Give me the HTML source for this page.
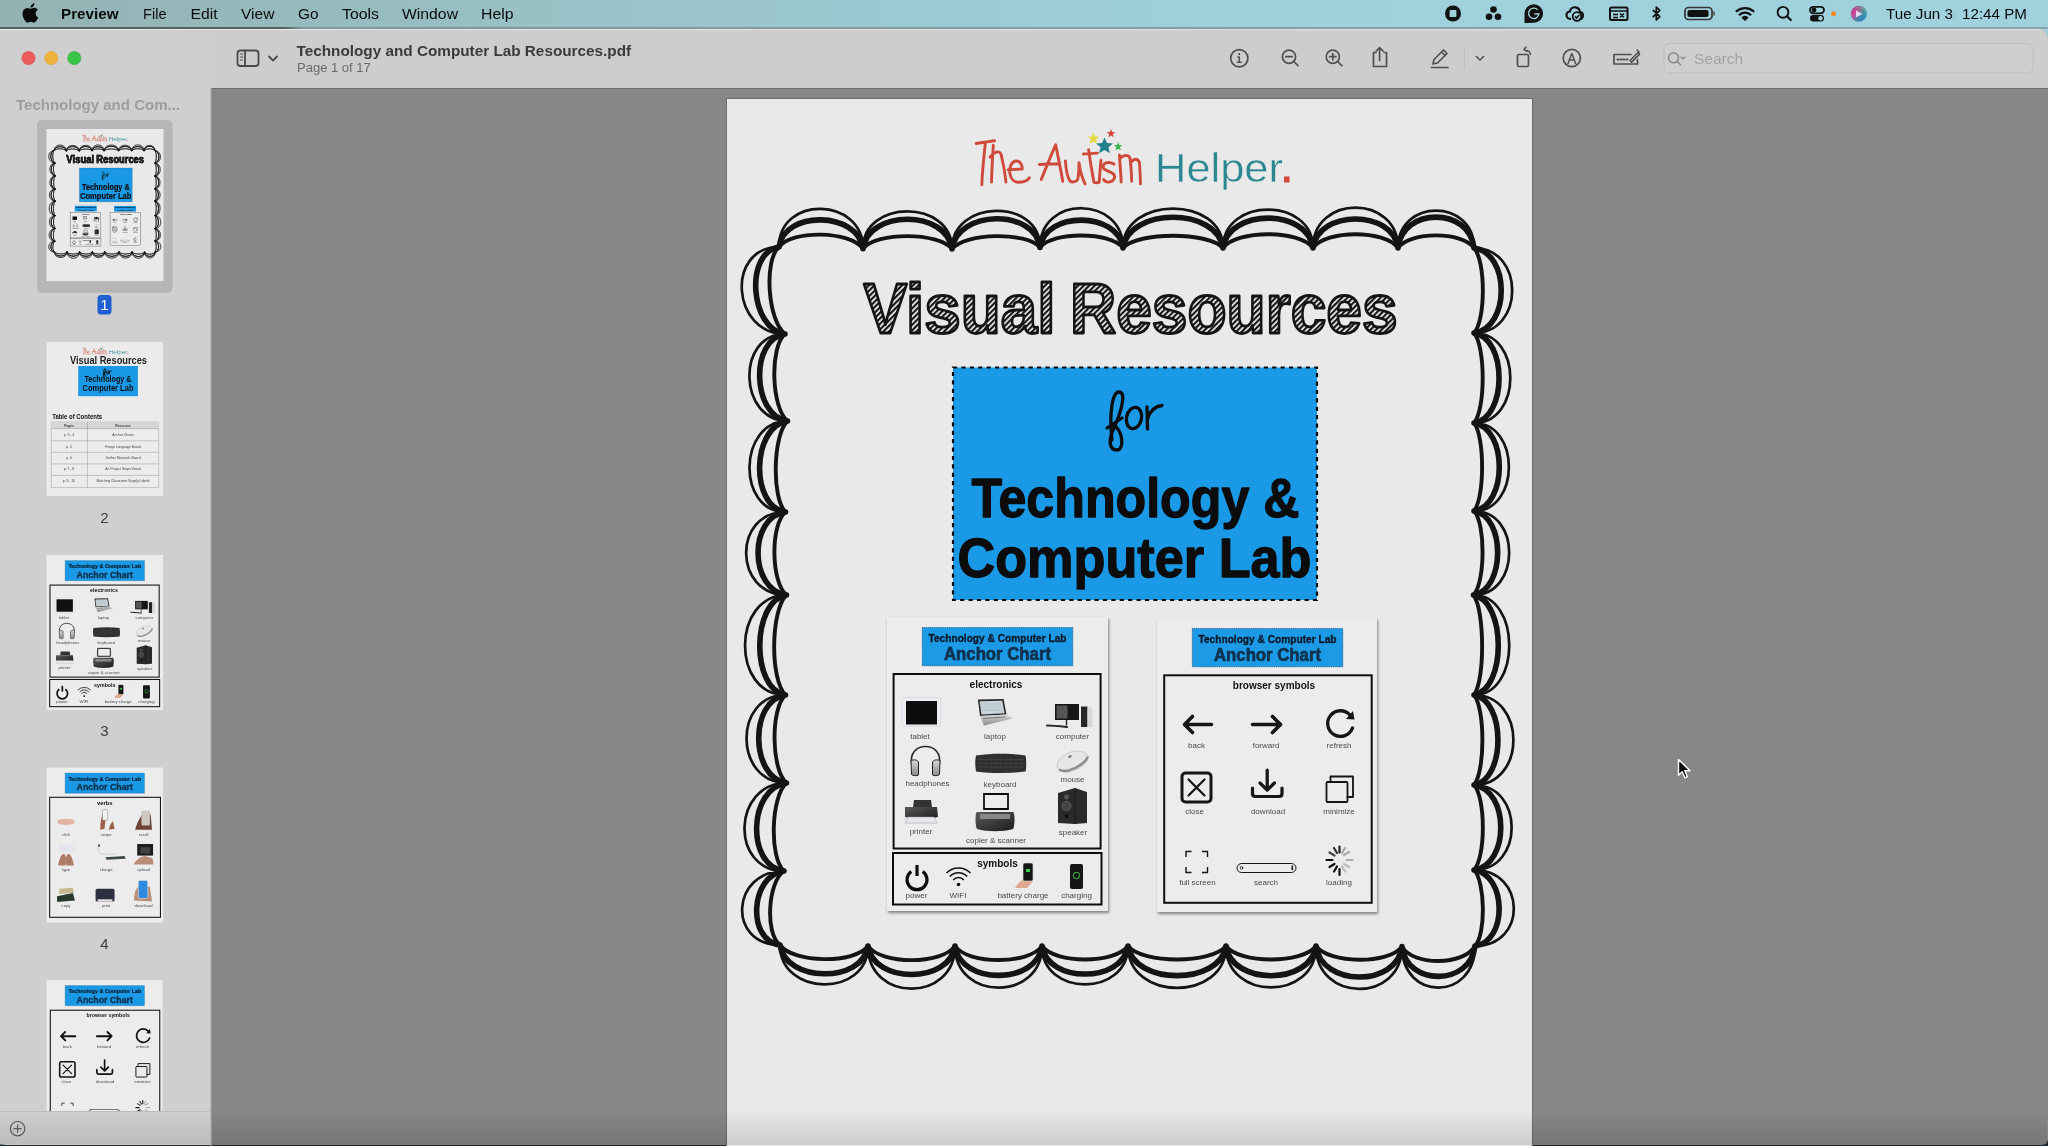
<!DOCTYPE html>
<html><head><meta charset="utf-8">
<style>
html,body{margin:0;padding:0;}
body{width:2048px;height:1146px;overflow:hidden;position:relative;background:linear-gradient(180deg,#a0d0dc 0,#a0d0dc 60px,#1b2838 60px);font-family:"Liberation Sans",sans-serif;}
.abs{position:absolute;}
#menubar{left:0;top:0;width:2048px;height:27px;background:linear-gradient(90deg,#93b2b3 0%,#99c3c9 30%,#9fd0dc 60%,#a0d2de 100%);}
#mbline{left:0;top:27px;width:2048px;height:1.5px;background:linear-gradient(90deg,#56625f 0,#56625f 285px,#7d979c 300px,#86a6ae 100%);}
#win{left:0;top:28.5px;width:2048px;height:1116px;border-radius:0 9px 6px 6px;overflow:hidden;background:#878787;}
#sidebar{left:0;top:0;width:211px;height:1116px;background:#cfcfcf;border-top:1px solid #e4e4e4;}
#toolbar{left:211px;top:0;width:1837px;height:58.5px;background:#cdcdcd;border-bottom:1px solid #6f6f6f;border-top:1px solid #e4e4e4;}
#sbbar{left:0;top:1083.5px;width:211px;height:33px;background:linear-gradient(90deg,#d0d0d0,#c8c8c8);border-top:1px solid #bdbdbd;}
</style></head><body>
<div id="menubar" class="abs"></div><div id="mbline" class="abs"></div>
<div id="win" class="abs">
  <div id="sidebar" class="abs"></div>
  <div id="toolbar" class="abs"></div>
</div>
<svg class="abs" style="left:0;top:0;will-change:transform" width="2048" height="1146" viewBox="0 0 2048 1146">
<defs>
<filter id="cardsh" x="-10%" y="-10%" width="125%" height="125%"><feGaussianBlur in="SourceAlpha" stdDeviation="1.6"/><feOffset dx="1" dy="1.5"/><feComponentTransfer><feFuncA type="linear" slope="0.45"/></feComponentTransfer><feMerge><feMergeNode/><feMergeNode in="SourceGraphic"/></feMerge></filter>
<linearGradient id="gsilver" x1="0" y1="0" x2="0" y2="1"><stop offset="0" stop-color="#d8d8d8"/><stop offset="1" stop-color="#8a8a8a"/></linearGradient>
<linearGradient id="gdark" x1="0" y1="0" x2="1" y2="1"><stop offset="0" stop-color="#5a5a5a"/><stop offset="1" stop-color="#1c1c1c"/></linearGradient>
<g id="hdr">
<rect x="35.3" y="10.5" width="150.5" height="38.3" fill="#1a9ae6" stroke="#0e4a78" stroke-width="0.8" stroke-dasharray="1 0.9"/>
<text x="110.5" y="25.3" text-anchor="middle" font-family="Liberation Sans" font-weight="bold" font-size="11" fill="#0a1a28" stroke="#0a1a28" stroke-width="0.35" textLength="138" lengthAdjust="spacingAndGlyphs">Technology &amp; Computer Lab</text>
<text x="110.5" y="43" text-anchor="middle" font-family="Liberation Sans" font-weight="bold" font-size="17.5" fill="#12334f" stroke="#0e2a42" stroke-width="0.6" textLength="107" lengthAdjust="spacingAndGlyphs">Anchor Chart</text>
</g>
<g id="cardL">
<rect x="0" y="0" width="221" height="294" fill="#ececec"/>
<use href="#hdr"/>
<rect x="6.6" y="57" width="207" height="174.5" fill="none" stroke="#111" stroke-width="2"/>
<rect x="6" y="236" width="208.5" height="51.5" fill="none" stroke="#111" stroke-width="2"/>
<g font-family="Liberation Sans" font-weight="bold" fill="#111" text-anchor="middle">
<text x="109" y="71" font-size="10">electronics</text>
<text x="110.5" y="249.5" font-size="10">symbols</text>
</g>
<g font-family="Liberation Sans" font-size="8" fill="#4a4a4a" text-anchor="middle">
<text x="33" y="122">tablet</text><text x="108" y="122">laptop</text><text x="185.5" y="122">computer</text>
<text x="40.5" y="169">headphones</text><text x="113" y="169.5">keyboard</text><text x="185.5" y="164.5">mouse</text>
<text x="34" y="217">printer</text><text x="109" y="226">copier &amp; scanner</text><text x="186" y="217.5">speaker</text>
<text x="29.5" y="281">power</text><text x="71" y="281">WIFI</text><text x="136" y="281">battery charge</text><text x="189.5" y="281">charging</text>
</g>
<!-- tablet -->
<rect x="15" y="80.5" width="38.5" height="29" rx="3" fill="#ececf2" stroke="#d6d6de" stroke-width="0.8"/>
<rect x="19" y="84" width="31" height="23.5" fill="#111"/>
<!-- laptop -->
<path d="M90.9 82.5L116.6 82L119.5 97.5L93 99Z" fill="#2a2a2a"/><path d="M92.6 84.2L115.2 83.8L117.6 96.2L94.5 97.4Z" fill="#c9d3da"/><path d="M94 87h20M94.5 90h20M95 93h20" stroke="#8aa" stroke-width="0.5"/>
<path d="M93 99L119.5 97.5L125.8 101.5L97 108.5Z" fill="url(#gsilver)"/><path d="M96 101.5l22-1.5" stroke="#666" stroke-width="0.8"/>
<!-- computer -->
<rect x="168" y="87" width="24" height="16" fill="#151515"/><rect x="169.5" y="88.5" width="11" height="13" fill="#555"/>
<path d="M179.5 103v5.5" stroke="#222" stroke-width="1.4"/><path d="M160 108.5c5 0 15 1 20 1.5" stroke="#2a2a2a" stroke-width="2.2" stroke-linecap="round"/>
<rect x="194" y="89.5" width="6.5" height="20.5" fill="#262626"/><path d="M200.5 89.5l5 1.5v19l-5 0z" fill="#d8d8d8"/>
<!-- headphones -->
<path d="M25 148C22 136 30 129.5 38.5 129.5C47 129.5 55 136 52 148" fill="none" stroke="#2a2a2a" stroke-width="1.6"/>
<path d="M24 143.5c3-1 6-1 7.5 1.5v13c-2 1-5 1-7-0.5z" fill="url(#gsilver)" stroke="#222" stroke-width="1"/>
<path d="M53 143.5c-3-1-6-1-7.5 1.5v13c2 1 5 1 7-0.5z" fill="url(#gsilver)" stroke="#222" stroke-width="1"/>
<!-- keyboard -->
<g transform="translate(0 2)"><path d="M89 136.5c16-2.2 34-2.2 49.5 0c1 5 1 12 0 16c-16 2-34 2-49.5 0c-1-5-1-12 0-16z" fill="#2f2f2f"/>
<path d="M90.5 140.5h46.5M90.5 144.3h46.5M90.5 148h46.5" stroke="#555" stroke-width="0.5"/><path d="M94 136v17M99 136v17M104 136v17M109 136v17M114 136v17M119 136v17M124 136v17M129 136v17M134 136v17" stroke="#454545" stroke-width="0.4"/>
</g>
<!-- mouse -->
<g transform="translate(0 2.5)"><path d="M170.5 147.5c-2-7 9-15.5 19-16 7-.4 12 2.5 11.5 7.5s-11 12.5-20 13.5c-5 .5-9.5-1-10.5-5z" fill="#e6e6e6" stroke="#b0b0b0" stroke-width="0.6"/>
<path d="M172 150c5 3 14 1 22-5c4-3 6.5-5.5 6.5-8" fill="none" stroke="#8d8d8d" stroke-width="2.5"/><ellipse cx="183" cy="137" rx="2" ry="1.2" fill="#777" transform="rotate(-35 183 137)"/>
</g>
<!-- printer -->
<path d="M27 183h17l1 7h-19z" fill="#333"/><path d="M18 190h32l1 10c-10 2-22 2-33 0z" fill="url(#gdark)"/><path d="M21 200h26l3 6h-32z" fill="#e6e6ee" stroke="#999" stroke-width="0.5"/>
<!-- copier -->
<path d="M97 177h24v15h-24z" fill="none" stroke="#111" stroke-width="1.8"/>
<path d="M90 195h36c2 0 2 14 0 17-10 3-26 3-36 0-2-3-2-17 0-17z" fill="url(#gdark)"/><path d="M93 197h30v5h-30z" fill="#888"/>
<!-- speaker -->
<g transform="translate(99 0)"><path d="M72 176l17-5 12 4v31l-12 1-17-1z" fill="#2b2b2b"/><path d="M89 171v36" stroke="#111" stroke-width="0.8"/>
<circle cx="80.5" cy="180" r="2.5" fill="#555"/><circle cx="80.5" cy="189" r="4.5" fill="#444" stroke="#666" stroke-width="0.8"/><circle cx="80.5" cy="199" r="2" fill="#111"/>
</g>
<!-- power -->
<path d="M24.3 254.5a10 10 0 1 0 11.4 0" fill="none" stroke="#111" stroke-width="3.2"/><path d="M30 248v11" stroke="#111" stroke-width="3.2"/>
<!-- wifi -->
<path d="M59.5 256a17 17 0 0 1 24 0M62.8 259.6a12 12 0 0 1 17.4 0M66.2 263a7 7 0 0 1 10.6 0" fill="none" stroke="#111" stroke-width="1.5"/><circle cx="71.5" cy="267.5" r="1.8" fill="#111"/>
<!-- battery charge -->
<path d="M128 271c3-5 8-10 13-10l5 3-6 7z" fill="#e0a890"/>
<rect x="136" y="246" width="10" height="18" rx="1.8" fill="#151515" stroke="#ddd" stroke-width="0.6"/><rect x="139" y="252" width="4" height="3" fill="#3ed14a"/>
<!-- charging -->
<rect x="183" y="247" width="13" height="25" rx="2" fill="#141414"/><circle cx="189.5" cy="258.5" r="3.2" fill="none" stroke="#3ed14a" stroke-width="1"/>
</g>
<g id="cardR">
<rect x="0" y="0" width="220" height="294" fill="#ececec"/>
<use href="#hdr"/>
<rect x="7.2" y="57.3" width="207.5" height="227.5" fill="none" stroke="#111" stroke-width="2"/>
<text x="117" y="70.5" text-anchor="middle" font-family="Liberation Sans" font-weight="bold" font-size="10" fill="#111">browser symbols</text>
<g font-family="Liberation Sans" font-size="8" fill="#4a4a4a" text-anchor="middle">
<text x="39.5" y="129.7">back</text><text x="109" y="129.7">forward</text><text x="182" y="129.7">refresh</text>
<text x="37.6" y="196">close</text><text x="111" y="196">download</text><text x="182" y="196">minimize</text>
<text x="40.4" y="267">full screen</text><text x="109" y="267">search</text><text x="182" y="267">loading</text>
</g>
<g fill="none" stroke="#121212" stroke-linecap="round" stroke-linejoin="round">
<path d="M54.5 106.5H27.5M35.5 98.5l-8 8 8 8" stroke-width="3.6"/>
<path d="M95.5 106.5H123.5M115.5 98.5l8 8-8 8" stroke-width="3.6"/>
<path d="M193 97A12.8 12.8 0 1 0 195.5 110" stroke-width="3.3"/>
<rect x="25" y="155" width="29" height="29" rx="3.5" stroke-width="3"/><path d="M31.5 161.5l16 16M47.5 161.5l-16 16" stroke-width="2.2"/>
<path d="M110.2 152v20M103 165l7.2 7.2 7.2-7.2M95.5 170v5.5c0 2 1 3 3 3h23.5c2 0 3-1 3-3V170" stroke-width="3.2"/>
<rect x="169.5" y="164" width="21" height="20" rx="1" stroke-width="1.8"/><path d="M173.5 164v-5.5h22.5v20.5h-5.5" stroke-width="1.8"/>
<path d="M29 239v-5.5h5.5M45 233.5h5.5v5.5M50.5 249v5.5h-5.5M34.5 254.5h-5.5v-5.5" stroke-width="1.4" stroke-linecap="butt"/>
<rect x="80" y="245.5" width="59" height="9" rx="4.5" stroke-width="1"/><circle cx="84.5" cy="249.8" r="1.3" stroke-width="0.8"/>
</g>
<path d="M196 93l1.5 8.5-8.5-.5z" fill="#121212"/>
<rect x="134.5" y="247.5" width="1.6" height="4.6" fill="#121212"/>
<g stroke-linecap="round" stroke-width="2.2">
<path d="M182.5 228.5v6" stroke="#222"/><path d="M188 230l-3 5" stroke="#aaa"/><path d="M192 234l-5 3" stroke="#aaa"/><path d="M195.5 242h-6" stroke="#aaa"/><path d="M192 249l-5-3" stroke="#bbb"/><path d="M188 253.5l-3-5" stroke="#bbb"/>
<path d="M182.5 257v-6" stroke="#111"/><path d="M177 253.5l3-5" stroke="#111"/><path d="M172.5 249l5-3" stroke="#111"/><path d="M169.5 242h6" stroke="#111"/><path d="M172.5 234.5l5 3" stroke="#444"/><path d="M177 230l3 5" stroke="#333"/>
</g>
</g>
</defs>

<g id="pg1">
<rect x="727" y="99" width="805" height="1047" fill="#e9e9e9"/>
<g fill="none" stroke="#141414" stroke-linecap="round"><path stroke-width="2.7" d="M779.0 247.0C779.0 195.1 863.0 196.8 863.0 248.7M863.0 248.7C863.0 198.7 952.0 199.0 952.0 249.0M952.0 249.0C952.0 199.1 1040.0 197.6 1040.0 247.5M1040.0 247.5C1040.0 194.8 1123.0 195.3 1123.0 248.0M1123.0 248.0C1123.0 195.4 1223.0 195.4 1223.0 248.0M1223.0 248.0C1223.0 196.9 1313.0 196.9 1313.0 248.0M1313.0 248.0C1313.0 194.2 1398.0 194.2 1398.0 248.0M1398.0 248.0C1398.0 198.2 1474.0 198.2 1474.0 248.0M780.0 945.0C780.0 996.8 868.0 997.8 868.0 946.0M868.0 946.0C868.0 1002.9 955.0 1002.9 955.0 946.0M955.0 946.0C955.0 1001.6 1042.0 1001.6 1042.0 946.0M1042.0 946.0C1042.0 997.2 1128.0 997.2 1128.0 946.0M1128.0 946.0C1128.0 1001.9 1226.0 1001.9 1226.0 946.0M1226.0 946.0C1226.0 1001.2 1316.0 1001.2 1316.0 946.0M1316.0 946.0C1316.0 1002.8 1402.0 1003.4 1402.0 946.6M1402.0 946.6C1402.0 1001.7 1475.0 1001.1 1475.0 946.0M779.0 247.0C725.5 247.0 731.5 334.0 785.0 334.0M785.0 334.0C735.9 334.0 738.4 421.0 787.5 421.0M787.5 421.0C738.2 421.0 736.2 512.0 785.5 512.0M785.5 512.0C732.4 512.0 733.4 595.0 786.5 595.0M786.5 595.0C731.9 595.0 730.9 695.0 785.5 695.0M785.5 695.0C732.9 695.0 733.9 783.0 786.5 783.0M786.5 783.0C732.2 783.0 729.7 871.0 784.0 871.0M784.0 871.0C730.9 871.0 726.9 945.0 780.0 945.0M1474.0 248.0C1524.9 248.0 1524.9 333.0 1474.0 333.0M1474.0 333.0C1522.4 333.0 1522.4 423.0 1474.0 423.0M1474.0 423.0C1520.5 423.0 1520.5 511.0 1474.0 511.0M1474.0 511.0C1521.2 511.0 1520.7 595.0 1473.5 595.0M1473.5 595.0C1520.8 595.0 1521.3 695.0 1474.0 695.0M1474.0 695.0C1526.5 695.0 1526.5 785.0 1474.0 785.0M1474.0 785.0C1524.2 785.0 1524.2 870.0 1474.0 870.0M1474.0 870.0C1526.4 870.0 1527.4 946.0 1475.0 946.0"/><path stroke-width="5.6" d="M779.0 247.0C784.0 209.8 858.0 211.3 863.0 248.7M863.0 248.7C868.3 209.3 946.7 209.5 952.0 249.0M952.0 249.0C957.3 209.6 1034.7 208.3 1040.0 247.5M1040.0 247.5C1045.0 210.7 1118.0 211.1 1123.0 248.0M1123.0 248.0C1129.0 207.0 1217.0 207.0 1223.0 248.0M1223.0 248.0C1228.4 208.1 1307.6 208.1 1313.0 248.0M1313.0 248.0C1318.1 209.3 1392.9 209.3 1398.0 248.0M1398.0 248.0C1402.6 206.8 1469.4 206.8 1474.0 248.0M780.0 945.0C785.3 982.8 862.7 983.7 868.0 946.0M868.0 946.0C873.2 984.1 949.8 984.1 955.0 946.0M955.0 946.0C960.2 985.2 1036.8 985.2 1042.0 946.0M1042.0 946.0C1047.2 983.4 1122.8 983.4 1128.0 946.0M1128.0 946.0C1133.9 985.5 1220.1 985.5 1226.0 946.0M1226.0 946.0C1231.4 985.6 1310.6 985.6 1316.0 946.0M1316.0 946.0C1321.2 987.0 1396.8 987.6 1402.0 946.6M1402.0 946.6C1406.4 986.6 1470.6 986.1 1475.0 946.0M779.0 247.0C744.5 252.2 749.8 328.8 785.0 334.0M785.0 334.0C749.7 339.2 751.9 415.8 787.5 421.0M787.5 421.0C751.5 426.5 749.8 506.5 785.5 512.0M785.5 512.0C748.3 517.0 749.2 590.0 786.5 595.0M786.5 595.0C751.5 601.0 750.6 689.0 785.5 695.0M785.5 695.0C749.2 700.3 750.1 777.7 786.5 783.0M786.5 783.0C748.2 788.3 746.0 865.7 784.0 871.0M784.0 871.0C750.1 875.4 746.5 940.6 780.0 945.0M1474.0 248.0C1510.3 253.1 1510.3 327.9 1474.0 333.0M1474.0 333.0C1507.4 338.4 1507.4 417.6 1474.0 423.0M1474.0 423.0C1507.7 428.3 1507.7 505.7 1474.0 511.0M1474.0 511.0C1505.8 516.0 1505.4 590.0 1473.5 595.0M1473.5 595.0C1506.2 601.0 1506.7 689.0 1474.0 695.0M1474.0 695.0C1505.9 700.4 1505.9 779.6 1474.0 785.0M1474.0 785.0C1509.7 790.1 1509.7 864.9 1474.0 870.0M1474.0 870.0C1506.9 874.6 1507.8 941.4 1475.0 946.0"/><path stroke-width="3.9" d="M779.0 247.0C791.6 229.6 850.4 230.8 863.0 248.7M863.0 248.7C876.4 231.8 938.6 232.0 952.0 249.0M952.0 249.0C965.2 232.6 1026.8 231.6 1040.0 247.5M1040.0 247.5C1052.5 231.3 1110.5 231.6 1123.0 248.0M1123.0 248.0C1138.0 231.6 1208.0 231.6 1223.0 248.0M1223.0 248.0C1236.5 229.6 1299.5 229.6 1313.0 248.0M1313.0 248.0C1325.8 229.6 1385.2 229.6 1398.0 248.0M1398.0 248.0C1409.4 231.2 1462.6 231.2 1474.0 248.0M780.0 945.0C793.2 963.3 854.8 964.0 868.0 946.0M868.0 946.0C881.0 964.8 942.0 964.8 955.0 946.0M955.0 946.0C968.0 964.7 1029.0 964.7 1042.0 946.0M1042.0 946.0C1054.9 963.9 1115.1 963.9 1128.0 946.0M1128.0 946.0C1142.7 964.1 1211.3 964.1 1226.0 946.0M1226.0 946.0C1239.5 964.1 1302.5 964.1 1316.0 946.0M1316.0 946.0C1328.9 964.0 1389.1 964.5 1402.0 946.6M1402.0 946.6C1413.0 966.1 1464.0 965.7 1475.0 946.0M779.0 247.0C763.6 260.1 767.8 320.9 785.0 334.0M785.0 334.0C769.5 347.1 771.3 407.9 787.5 421.0M787.5 421.0C772.9 434.6 771.5 498.4 785.5 512.0M785.5 512.0C770.2 524.5 770.9 582.5 786.5 595.0M786.5 595.0C770.6 610.0 769.9 680.0 785.5 695.0M785.5 695.0C770.4 708.2 771.1 769.8 786.5 783.0M786.5 783.0C770.9 796.2 769.1 857.8 784.0 871.0M784.0 871.0C767.7 882.1 764.9 933.9 780.0 945.0M1474.0 248.0C1485.8 260.8 1485.8 320.2 1474.0 333.0M1474.0 333.0C1485.6 346.5 1485.6 409.5 1474.0 423.0M1474.0 423.0C1484.8 436.2 1484.8 497.8 1474.0 511.0M1474.0 511.0C1485.7 523.6 1485.3 582.4 1473.5 595.0M1473.5 595.0C1484.7 610.0 1485.1 680.0 1474.0 695.0M1474.0 695.0C1485.2 708.5 1485.2 771.5 1474.0 785.0M1474.0 785.0C1485.8 797.8 1485.8 857.2 1474.0 870.0M1474.0 870.0C1485.3 881.4 1486.0 934.6 1475.0 946.0"/></g>
<defs>
<pattern id="hatch" patternUnits="userSpaceOnUse" width="3.9" height="3.9" patternTransform="rotate(-45)">
<rect width="3.9" height="3.9" fill="#f4f4f4"/><rect width="3.9" height="2.2" fill="#161616"/>
</pattern>
</defs>
<!-- logo -->
<g id="logo"><g fill="none" stroke="#cf4a3a" stroke-width="2.9" stroke-linecap="round" stroke-linejoin="round">
<path d="M976.2 143.5C983 142.5 989 141.5 994.6 140.8M985.4 142.1C984 158 982 172 981.9 184.8"/>
<path d="M993.3 145.2C992.5 158 991.8 170 991.5 182.1M990 157C994 152 999 150 1001 154C1003 162 1005 172 1006 182.1"/>
<path d="M1008.2 169.8C1013 169.5 1018 169.2 1022.3 169C1022 163 1019 160.5 1015.7 161C1011 162 1009 168 1010 174C1011 180 1015 182.5 1019 182.3C1024 182 1028 180 1029.3 177.7"/>
<path d="M1041.2 179.5C1046 168 1051 155 1055.7 144.8C1058 157 1061 170 1062.7 181.2M1039.4 164.5C1046 164.2 1053 163.9 1058.8 163.7"/>
<path d="M1065.4 161C1066 170 1067 177 1070.2 181.2C1073 183 1077 181 1077.7 179.5C1079 173 1079 167 1079 162.8C1080 170 1082 178 1085.1 183.9"/>
<path d="M1088.6 149.6C1090 160 1092 172 1093.9 182.1C1095 183 1097 182.8 1098.3 182.6M1083.4 154C1088 153.6 1093 153.3 1097.4 153.1"/>
<path d="M1101 160.2C1100.3 168 1099.6 175 1099.2 182.1"/>
<path d="M1114.1 164.1C1111 162.5 1107.5 162.3 1105.8 162.8C1103 164 1102.5 167 1104 169C1107 171 1111 172 1113.5 174C1116 177 1114 181.5 1109 182.1C1106.5 182.2 1104.5 181 1103.6 179.5"/>
<path d="M1119.4 155C1120 164 1120.8 173 1121.2 182.1M1120 158.5C1123 155 1128 154 1130 158C1131 165 1131.5 174 1131.7 181.2M1131.5 162C1134 158.5 1138 158 1139.5 163C1140 170 1140.3 177 1140.5 183.9"/>
</g>
<g stroke="none">
<path fill="#e3dc45" transform="translate(1093.5 138) scale(1.25) translate(-1093.5 -138)" d="M1093.5 133.5L1094.8 136.8L1098 137L1095.6 139.2L1096.4 142.5L1093.5 140.7L1090.6 142.5L1091.4 139.2L1089 137L1092.2 136.8Z"/>
<path fill="#d4473a" transform="translate(1111 133) scale(1.15) translate(-1111 -133)" d="M1111 129.5L1112 132.1L1114.6 132.3L1112.6 134L1113.3 136.7L1111 135.2L1108.7 136.7L1109.4 134L1107.4 132.3L1110 132.1Z"/>
<path fill="#23818f" transform="translate(1104.5 146) scale(1.2) translate(-1104.5 -146)" d="M1104.5 139L1106.6 143.6L1111.5 143.9L1107.8 147.1L1109 152L1104.5 149.4L1100 152L1101.2 147.1L1097.5 143.9L1102.4 143.6Z"/>
<path fill="#3bb54a" transform="translate(1118 146.5) scale(1.15) translate(-1118 -146.5)" d="M1118.1 142.8L1119.1 145.3L1121.7 145.5L1119.7 147.2L1120.4 149.8L1118.1 148.4L1115.8 149.8L1116.5 147.2L1114.5 145.5L1117.1 145.3Z"/>
</g>
<text x="1155" y="182.4" font-family="Liberation Sans" font-size="41.5" fill="#2a8792" stroke="#e9e9e9" stroke-width="0.5" textLength="128" lengthAdjust="spacingAndGlyphs">Helper</text>
<rect x="1284" y="176.5" width="5.5" height="6" fill="#d4473a"/>
</g>
<!-- title -->
<g font-family="Liberation Sans" font-weight="bold" font-size="70" fill="url(#hatch)" stroke="#141414" stroke-width="2.8" stroke-linejoin="round">
<text x="863.5" y="333" textLength="192" lengthAdjust="spacingAndGlyphs">Visual</text>
<text x="1070" y="333" textLength="327.5" lengthAdjust="spacingAndGlyphs">Resources</text>
</g>
<!-- blue box -->
<rect x="953" y="367.5" width="364" height="232.5" fill="#1a9ae6" stroke="#0b0b0b" stroke-width="2.2" stroke-dasharray="4.2 4.2"/>
<g fill="none" stroke="#0c0c0c" stroke-width="3.3" stroke-linecap="round">
<path d="M1112 440C1109 415 1112 392 1119 392C1127 392 1121 412 1114 428C1108 440 1109 450 1117 450C1124 450 1124 432 1113 424"/>
<path d="M1107 428L1122 418"/>
<ellipse cx="1134" cy="418" rx="7.5" ry="10.8" transform="rotate(12 1134 418)"/>
<path d="M1147 407L1147.5 429M1147.5 419C1150 410 1155 406.5 1162 405.5"/>
</g>
<text x="971.5" y="517.3" font-family="Liberation Sans" font-weight="bold" font-size="56" fill="#0c0c0c" stroke="#0c0c0c" stroke-width="1.3" stroke-linejoin="round" textLength="328" lengthAdjust="spacingAndGlyphs">Technology &amp;</text>
<text x="957.5" y="577.3" font-family="Liberation Sans" font-weight="bold" font-size="56" fill="#0c0c0c" stroke="#0c0c0c" stroke-width="1.3" stroke-linejoin="round" textLength="354" lengthAdjust="spacingAndGlyphs">Computer Lab</text>

<g filter="url(#cardsh)"><use href="#cardL" transform="translate(887 617)"/></g>
<g filter="url(#cardsh)"><use href="#cardR" transform="translate(1157 618)"/></g>
</g>
<rect x="726.5" y="98.5" width="806" height="1050" fill="none" stroke="#6e6e6e" stroke-width="1"/>
<!-- menubar text -->
<g font-family="Liberation Sans" font-size="14.6" fill="#0b0b0b">
<text x="61" y="18.6" font-weight="bold" font-size="15.2" textLength="57.5" lengthAdjust="spacingAndGlyphs">Preview</text>
<text x="143" y="18.6" textLength="23.5" lengthAdjust="spacingAndGlyphs">File</text>
<text x="190.5" y="18.6" textLength="27" lengthAdjust="spacingAndGlyphs">Edit</text>
<text x="241" y="18.6" textLength="33.5" lengthAdjust="spacingAndGlyphs">View</text>
<text x="298" y="18.6" textLength="20.5" lengthAdjust="spacingAndGlyphs">Go</text>
<text x="342" y="18.6" textLength="37" lengthAdjust="spacingAndGlyphs">Tools</text>
<text x="402" y="18.6" textLength="56" lengthAdjust="spacingAndGlyphs">Window</text>
<text x="481" y="18.6" textLength="32.5" lengthAdjust="spacingAndGlyphs">Help</text>
<text x="1886" y="18.6" font-size="14.6" textLength="67" lengthAdjust="spacingAndGlyphs">Tue Jun 3</text>
<text x="1962" y="18.6" font-size="14.6" textLength="65" lengthAdjust="spacingAndGlyphs">12:44 PM</text>
</g>
<!-- apple -->
<path fill="#0b0b0b" transform="translate(2.5 0)" d="M33.2 13.3c0-2.4 2-3.5 2.1-3.6-1.1-1.7-2.9-1.9-3.5-1.9-1.5-.2-2.9.9-3.7.9-.8 0-1.9-.9-3.2-.8-1.6 0-3.1 1-4 2.4-1.7 3-.4 7.4 1.2 9.8.8 1.2 1.8 2.5 3 2.4 1.2 0 1.7-.8 3.1-.8 1.5 0 1.9.8 3.2.8 1.3 0 2.1-1.2 2.9-2.4.9-1.3 1.3-2.7 1.3-2.7s-2.4-1-2.4-4.1zM30.9 6.2c.7-.8 1.1-1.9 1-3-1 0-2.1.7-2.8 1.5-.6.7-1.2 1.8-1 2.9 1.1.1 2.1-.6 2.8-1.4z"/>
<!-- menubar right icons -->
<g fill="#111" stroke="none">
<circle cx="1453" cy="13.5" r="8"/><rect x="1449.6" y="10.1" width="6.8" height="6.8" rx="1" fill="#a0cfd9"/>
<circle cx="1493.5" cy="9.5" r="3.3"/><circle cx="1489" cy="16.8" r="3.3"/><circle cx="1498" cy="16.8" r="3.3"/>
</g>
<g fill="none" stroke="#111">
<path d="M1524.5 23V13.5A9.3 9.3 0 1 1 1533.8 22.8Z" fill="#111" stroke="none"/><path d="M1537.6 9.8A5.2 5.2 0 1 0 1538.9 14H1534.3" stroke="#a0cfd9" stroke-width="1.4"/>
<path d="M1571 19c-3 0-4.5-2-4.5-4 0-2 1.6-3.6 3.4-3.5.5-2.8 3-4.5 5.5-4.2 2.5.3 4.4 2.3 4.5 4.8 2 .3 3.2 2 3 3.7-.2 1.8-1.7 3.2-3.5 3.2" stroke-width="2.2"/><circle cx="1577" cy="16.5" r="4.3" stroke-width="1.8"/><path d="M1575 16.5l1.5 1.5 2.8-3" stroke-width="1.6"/>
<rect x="1610" y="7.5" width="17.5" height="12.5" rx="1.5" stroke-width="2"/><path d="M1610 11h17.5" stroke-width="1.5"/><path d="M1613 14.5h5M1613 17.5h5M1620 13.5l4 4M1624 13.5l-4 4" stroke-width="1.3"/>
<path d="M1652.8 9.8l7 6.8-3.5 3.4V7l3.5 3.4-7 6.8" stroke-width="1.7" stroke-linejoin="round"/>
<rect x="1685" y="7.5" width="27" height="12" rx="3.5" stroke-width="1.7" stroke="#333"/><rect x="1687.5" y="10" width="21" height="7" rx="1.8" fill="#111" stroke="none"/><path d="M1714 11.5v4" stroke-width="1.6" stroke="#555"/>
<path d="M1736.6 11.2a13 13 0 0 1 16.8 0M1739.6 14.6a8.4 8.4 0 0 1 10.8 0" stroke-width="2.3" stroke-linecap="round"/><path d="M1741.8 17.6a4.4 4.4 0 0 1 6.4 0L1745 20.5Z" fill="#111" stroke="#111" stroke-width="1" stroke-linejoin="round"/>
<circle cx="1783" cy="12.3" r="5.4" stroke-width="1.9"/><path d="M1787 16.3l3.8 3.8" stroke-width="2.1" stroke-linecap="round"/>
</g>
<g>
<rect x="1810" y="6.8" width="14" height="6.5" rx="3.25" fill="none" stroke="#111" stroke-width="1.8"/><circle cx="1814" cy="10" r="2.4" fill="#111"/>
<rect x="1810" y="15" width="14" height="6.5" rx="3.25" fill="#111"/><circle cx="1820.5" cy="18.2" r="2.2" fill="#a0d0da"/>
<circle cx="1833.5" cy="13.8" r="2.5" fill="#f08a25"/>
</g>
<defs>
<radialGradient id="siri" cx="0.4" cy="0.4" r="0.7"><stop offset="0" stop-color="#f4f0ff"/><stop offset="0.35" stop-color="#c86ac8"/><stop offset="0.7" stop-color="#3d6fc8"/><stop offset="1" stop-color="#3fbfa0"/></radialGradient>
</defs>
<defs><linearGradient id="siri2" x1="0" y1="0" x2="1" y2="1"><stop offset="0" stop-color="#9a3a8a"/><stop offset="0.35" stop-color="#d24a9a"/><stop offset="0.65" stop-color="#3a8ab0"/><stop offset="1" stop-color="#2f7ac0"/></linearGradient>
<linearGradient id="siri3" x1="1" y1="0" x2="0" y2="1"><stop offset="0" stop-color="#3fb88a" stop-opacity="0.9"/><stop offset="0.5" stop-color="#3fb88a" stop-opacity="0"/></linearGradient></defs>
<circle cx="1858.8" cy="13.8" r="8" fill="url(#siri2)"/><circle cx="1858.8" cy="13.8" r="8" fill="url(#siri3)"/><path d="M1856 10.5l6.5 3.5-6.5 3.3z" fill="#f0f0f8" opacity="0.85"/>
<!-- traffic lights -->
<circle cx="28.5" cy="58" r="6.6" fill="#ec5a5e" stroke="#d84a4e" stroke-width="0.6"/>
<circle cx="51.3" cy="58" r="6.6" fill="#f0b43c" stroke="#d9a032" stroke-width="0.6"/>
<circle cx="74.3" cy="58" r="6.6" fill="#39c648" stroke="#2fae3c" stroke-width="0.6"/>
<!-- toolbar left -->
<g fill="none" stroke="#4a4a4a" stroke-width="1.8" stroke-linecap="round" stroke-linejoin="round">
<rect x="237.5" y="50.5" width="21" height="15.5" rx="3"/><path d="M245 50.5v15.5"/><path d="M240.5 54h2M240.5 57h2M240.5 60h2" stroke-width="1.2"/>
<path d="M269 56.5l4 4 4-4"/>
</g>
<text x="296.5" y="56.3" font-family="Liberation Sans" font-weight="bold" font-size="15.3" fill="#3b3b3b">Technology and Computer Lab Resources.pdf</text>
<text x="297" y="72.3" font-family="Liberation Sans" font-size="13" fill="#6b6b6b">Page 1 of 17</text>
<!-- toolbar right icons -->
<g fill="none" stroke="#505050" stroke-width="1.7" stroke-linecap="round" stroke-linejoin="round">
<circle cx="1239.3" cy="58.2" r="8.6"/><path d="M1239.3 57v5.2M1237.4 62.3h3.8M1237.9 57h1.4" stroke-width="1.5"/><circle cx="1239.2" cy="54.2" r="1.1" fill="#505050" stroke="none"/>
<circle cx="1289" cy="56.7" r="6.6"/><path d="M1293.8 61.5l4.2 4.2"/><path d="M1285.8 56.7h6.4"/>
<circle cx="1332.8" cy="56.7" r="6.6"/><path d="M1337.6 61.5l4.2 4.2"/><path d="M1329.6 56.7h6.4M1332.8 53.5v6.4"/>
<path d="M1376 52.5h-2.5v14h13v-14h-2.5M1379.6 60.5v-12.5M1376.2 51l3.4-3.4 3.4 3.4"/>
<path d="M1433 64l1-4.5 9.5-9.5 3.5 3.5-9.5 9.5zM1441.5 52l3.5 3.5" /><path d="M1431.5 67.5h16.5"/>
<path d="M1464.3 48v20" stroke="#bdbdbd" stroke-width="1"/>
<path d="M1476.5 56.5l3.5 3.5 3.5-3.5" stroke-width="1.6"/>
<rect x="1517.5" y="54.5" width="11" height="12" rx="1.5"/><path d="M1525 50.5c3-0.5 5 1 5.5 4M1524 49.5l2 -2.5M1524 49.5l2.6 1.8" stroke-width="1.5"/>
<circle cx="1571.8" cy="58" r="8.6"/><path d="M1568 63.5l3.8-10 3.8 10M1569.5 60h4.6" stroke-width="1.5"/>
<path d="M1614 54.5h17M1614 54.5v9.5h23.5v-4.5" /><path d="M1617.5 59.5h1M1620.5 59.5h1M1623.5 59.5h1M1626.5 59.5h1" stroke-width="2"/><path d="M1630 60.5l8-8 1.6 1.6-8 8zM1637 50l2 2" stroke-width="1.5"/>
</g>
<rect x="1664" y="43.5" width="369" height="29.5" rx="6" fill="#cfcfcf" stroke="#bdbdbd" stroke-width="1"/>
<g fill="none" stroke="#8a8a8a" stroke-width="1.6" stroke-linecap="round">
<circle cx="1673.5" cy="57.8" r="5"/><path d="M1677 61.3l3.5 3.5"/><path d="M1681 57l2 2 2-2" stroke-width="1.3"/>
</g>
<text x="1694" y="64.3" font-family="Liberation Sans" font-size="15.5" fill="#a2a2a2">Search</text>

<defs>
<clipPath id="sbclip"><rect x="0" y="90" width="211" height="1021"/></clipPath>
<g id="cardV">
<rect x="0" y="0" width="221" height="294" fill="#ececec"/>
<use href="#hdr"/>
<rect x="6" y="56.5" width="210" height="227.5" fill="none" stroke="#111" stroke-width="2"/>
<text x="110.5" y="72" text-anchor="middle" font-family="Liberation Sans" font-weight="bold" font-size="11" fill="#111">verbs</text>
<g font-family="Liberation Sans" font-size="8" fill="#4a4a4a" text-anchor="middle">
<text x="37" y="130">click</text><text x="113" y="130">swipe</text><text x="184" y="130">scroll</text>
<text x="37" y="197">type</text><text x="113" y="197">charge</text><text x="184" y="197">upload</text>
<text x="37" y="265">copy</text><text x="113" y="265">print</text><text x="184" y="265">download</text>
</g>
<ellipse cx="37" cy="103" rx="17" ry="6" fill="#e2b4a4"/>
<path d="M102 118c0-12 2-26 6-34l5 2-3 30zM118 118c2-8 5-14 8-16l3 14z" fill="#9a5f45"/><rect x="106" y="80" width="10" height="20" rx="2" fill="#f0f0f0" stroke="#666" stroke-width="0.8"/>
<path d="M168 118c4-14 12-30 20-36 6 0 10 6 10 12l2 24z" fill="#6e4436"/><rect x="180" y="82" width="16" height="28" rx="2" fill="#cfc8c0"/>
<rect x="22" y="147" width="30" height="12" fill="#e4e4ec"/><path d="M22 186c2-12 6-22 10-22 6 0 6 14 4 22zM52 186c-2-12-6-22-10-22-6 0-6 14-4 22z" fill="#b07a64"/>
<path d="M97 150c2 5 2 12 6 14h30" fill="none" stroke="#bbb" stroke-width="1.2"/><rect x="98" y="146" width="3" height="4" fill="#222"/><path d="M112 170l36-2 2 5-36 2z" fill="#3d4a44"/>
<rect x="172" y="145" width="30" height="22" fill="#1e1e1e"/><rect x="178" y="151" width="18" height="12" fill="#444"/><path d="M165 184c4-8 14-16 22-16l14 4 2 12z" fill="#b88e78"/>
<path d="M20 244l30-6 4 14-34 3z" fill="#273a2e"/><path d="M24 230l26-2 2 10-28 2z" fill="#c8b890"/>
<rect x="93" y="230" width="36" height="24" rx="3" fill="#2c3040"/><rect x="97" y="250" width="28" height="4" fill="#e8e8e8"/>
<path d="M166 252c0-16 4-26 12-28l18 2 4 28z" fill="#b89078"/><rect x="174" y="214" width="18" height="34" rx="3" fill="#2e8ae0" stroke="#ddd" stroke-width="1.2"/>
</g>
</defs>
<text x="16" y="109.5" font-family="Liberation Sans" font-weight="bold" font-size="15" fill="#9d9d9d" textLength="164" lengthAdjust="spacingAndGlyphs">Technology and Com...</text>
<rect x="37" y="120" width="135.5" height="173" rx="5" fill="#b6b6b6"/>
<g clip-path="url(#sbclip)">
<!-- page 1 -->
<g transform="translate(46.5 129) scale(0.14534) translate(-727 -99)"><use href="#pg1"/>
<g id="thumbframe" fill="none" stroke="#141414" stroke-linecap="round"><path stroke-width="4" d="M779.0 247.0C779.0 195.1 863.0 196.8 863.0 248.7M863.0 248.7C863.0 198.7 952.0 199.0 952.0 249.0M952.0 249.0C952.0 199.1 1040.0 197.6 1040.0 247.5M1040.0 247.5C1040.0 194.8 1123.0 195.3 1123.0 248.0M1123.0 248.0C1123.0 195.4 1223.0 195.4 1223.0 248.0M1223.0 248.0C1223.0 196.9 1313.0 196.9 1313.0 248.0M1313.0 248.0C1313.0 194.2 1398.0 194.2 1398.0 248.0M1398.0 248.0C1398.0 198.2 1474.0 198.2 1474.0 248.0M780.0 945.0C780.0 996.8 868.0 997.8 868.0 946.0M868.0 946.0C868.0 1002.9 955.0 1002.9 955.0 946.0M955.0 946.0C955.0 1001.6 1042.0 1001.6 1042.0 946.0M1042.0 946.0C1042.0 997.2 1128.0 997.2 1128.0 946.0M1128.0 946.0C1128.0 1001.9 1226.0 1001.9 1226.0 946.0M1226.0 946.0C1226.0 1001.2 1316.0 1001.2 1316.0 946.0M1316.0 946.0C1316.0 1002.8 1402.0 1003.4 1402.0 946.6M1402.0 946.6C1402.0 1001.7 1475.0 1001.1 1475.0 946.0M779.0 247.0C725.5 247.0 731.5 334.0 785.0 334.0M785.0 334.0C735.9 334.0 738.4 421.0 787.5 421.0M787.5 421.0C738.2 421.0 736.2 512.0 785.5 512.0M785.5 512.0C732.4 512.0 733.4 595.0 786.5 595.0M786.5 595.0C731.9 595.0 730.9 695.0 785.5 695.0M785.5 695.0C732.9 695.0 733.9 783.0 786.5 783.0M786.5 783.0C732.2 783.0 729.7 871.0 784.0 871.0M784.0 871.0C730.9 871.0 726.9 945.0 780.0 945.0M1474.0 248.0C1524.9 248.0 1524.9 333.0 1474.0 333.0M1474.0 333.0C1522.4 333.0 1522.4 423.0 1474.0 423.0M1474.0 423.0C1520.5 423.0 1520.5 511.0 1474.0 511.0M1474.0 511.0C1521.2 511.0 1520.7 595.0 1473.5 595.0M1473.5 595.0C1520.8 595.0 1521.3 695.0 1474.0 695.0M1474.0 695.0C1526.5 695.0 1526.5 785.0 1474.0 785.0M1474.0 785.0C1524.2 785.0 1524.2 870.0 1474.0 870.0M1474.0 870.0C1526.4 870.0 1527.4 946.0 1475.0 946.0"/><path stroke-width="6.5" d="M779.0 247.0C784.0 209.8 858.0 211.3 863.0 248.7M863.0 248.7C868.3 209.3 946.7 209.5 952.0 249.0M952.0 249.0C957.3 209.6 1034.7 208.3 1040.0 247.5M1040.0 247.5C1045.0 210.7 1118.0 211.1 1123.0 248.0M1123.0 248.0C1129.0 207.0 1217.0 207.0 1223.0 248.0M1223.0 248.0C1228.4 208.1 1307.6 208.1 1313.0 248.0M1313.0 248.0C1318.1 209.3 1392.9 209.3 1398.0 248.0M1398.0 248.0C1402.6 206.8 1469.4 206.8 1474.0 248.0M780.0 945.0C785.3 982.8 862.7 983.7 868.0 946.0M868.0 946.0C873.2 984.1 949.8 984.1 955.0 946.0M955.0 946.0C960.2 985.2 1036.8 985.2 1042.0 946.0M1042.0 946.0C1047.2 983.4 1122.8 983.4 1128.0 946.0M1128.0 946.0C1133.9 985.5 1220.1 985.5 1226.0 946.0M1226.0 946.0C1231.4 985.6 1310.6 985.6 1316.0 946.0M1316.0 946.0C1321.2 987.0 1396.8 987.6 1402.0 946.6M1402.0 946.6C1406.4 986.6 1470.6 986.1 1475.0 946.0M779.0 247.0C744.5 252.2 749.8 328.8 785.0 334.0M785.0 334.0C749.7 339.2 751.9 415.8 787.5 421.0M787.5 421.0C751.5 426.5 749.8 506.5 785.5 512.0M785.5 512.0C748.3 517.0 749.2 590.0 786.5 595.0M786.5 595.0C751.5 601.0 750.6 689.0 785.5 695.0M785.5 695.0C749.2 700.3 750.1 777.7 786.5 783.0M786.5 783.0C748.2 788.3 746.0 865.7 784.0 871.0M784.0 871.0C750.1 875.4 746.5 940.6 780.0 945.0M1474.0 248.0C1510.3 253.1 1510.3 327.9 1474.0 333.0M1474.0 333.0C1507.4 338.4 1507.4 417.6 1474.0 423.0M1474.0 423.0C1507.7 428.3 1507.7 505.7 1474.0 511.0M1474.0 511.0C1505.8 516.0 1505.4 590.0 1473.5 595.0M1473.5 595.0C1506.2 601.0 1506.7 689.0 1474.0 695.0M1474.0 695.0C1505.9 700.4 1505.9 779.6 1474.0 785.0M1474.0 785.0C1509.7 790.1 1509.7 864.9 1474.0 870.0M1474.0 870.0C1506.9 874.6 1507.8 941.4 1475.0 946.0"/><path stroke-width="5" d="M779.0 247.0C791.6 229.6 850.4 230.8 863.0 248.7M863.0 248.7C876.4 231.8 938.6 232.0 952.0 249.0M952.0 249.0C965.2 232.6 1026.8 231.6 1040.0 247.5M1040.0 247.5C1052.5 231.3 1110.5 231.6 1123.0 248.0M1123.0 248.0C1138.0 231.6 1208.0 231.6 1223.0 248.0M1223.0 248.0C1236.5 229.6 1299.5 229.6 1313.0 248.0M1313.0 248.0C1325.8 229.6 1385.2 229.6 1398.0 248.0M1398.0 248.0C1409.4 231.2 1462.6 231.2 1474.0 248.0M780.0 945.0C793.2 963.3 854.8 964.0 868.0 946.0M868.0 946.0C881.0 964.8 942.0 964.8 955.0 946.0M955.0 946.0C968.0 964.7 1029.0 964.7 1042.0 946.0M1042.0 946.0C1054.9 963.9 1115.1 963.9 1128.0 946.0M1128.0 946.0C1142.7 964.1 1211.3 964.1 1226.0 946.0M1226.0 946.0C1239.5 964.1 1302.5 964.1 1316.0 946.0M1316.0 946.0C1328.9 964.0 1389.1 964.5 1402.0 946.6M1402.0 946.6C1413.0 966.1 1464.0 965.7 1475.0 946.0M779.0 247.0C763.6 260.1 767.8 320.9 785.0 334.0M785.0 334.0C769.5 347.1 771.3 407.9 787.5 421.0M787.5 421.0C772.9 434.6 771.5 498.4 785.5 512.0M785.5 512.0C770.2 524.5 770.9 582.5 786.5 595.0M786.5 595.0C770.6 610.0 769.9 680.0 785.5 695.0M785.5 695.0C770.4 708.2 771.1 769.8 786.5 783.0M786.5 783.0C770.9 796.2 769.1 857.8 784.0 871.0M784.0 871.0C767.7 882.1 764.9 933.9 780.0 945.0M1474.0 248.0C1485.8 260.8 1485.8 320.2 1474.0 333.0M1474.0 333.0C1485.6 346.5 1485.6 409.5 1474.0 423.0M1474.0 423.0C1484.8 436.2 1484.8 497.8 1474.0 511.0M1474.0 511.0C1485.7 523.6 1485.3 582.4 1473.5 595.0M1473.5 595.0C1484.7 610.0 1485.1 680.0 1474.0 695.0M1474.0 695.0C1485.2 708.5 1485.2 771.5 1474.0 785.0M1474.0 785.0C1485.8 797.8 1485.8 857.2 1474.0 870.0M1474.0 870.0C1485.3 881.4 1486.0 934.6 1475.0 946.0"/></g>
<g font-family="Liberation Sans" font-weight="bold" font-size="70" fill="#2a2a2a" stroke="#111" stroke-width="4"><text x="863.5" y="333" textLength="192" lengthAdjust="spacingAndGlyphs">Visual</text><text x="1070" y="333" textLength="327.5" lengthAdjust="spacingAndGlyphs">Resources</text></g>
</g>
<!-- page 2 -->
<rect x="46.5" y="342" width="116.5" height="154" rx="1.5" fill="#ebebeb"/>
<g transform="translate(46.5 342) scale(0.14534) translate(-727 -99)">
<g>
<use href="#logo"/>
</g>
</g>
<text x="108.5" y="364.3" text-anchor="middle" font-family="Liberation Sans" font-weight="bold" font-size="10.5" fill="#222" textLength="77" lengthAdjust="spacingAndGlyphs">Visual Resources</text>
<rect x="78.2" y="366" width="59.7" height="30.2" fill="#1a9ae6"/>
<g transform="translate(103 368.5) scale(0.15) translate(-1106 -391)" fill="none" stroke="#0c0c0c" stroke-width="6" stroke-linecap="round"><path d="M1112 440C1109 415 1112 392 1119 392C1127 392 1121 412 1114 428C1108 440 1109 450 1117 450C1124 450 1124 432 1113 424M1107 428L1122 418M1147 407L1147.5 429M1147.5 419C1150 410 1155 406.5 1162 405.5"/><ellipse cx="1134" cy="418" rx="7.5" ry="10.8"/></g>
<text x="108" y="381.5" text-anchor="middle" font-family="Liberation Sans" font-weight="bold" font-size="8.3" fill="#0c0c0c" textLength="47" lengthAdjust="spacingAndGlyphs">Technology &amp;</text>
<text x="108" y="391" text-anchor="middle" font-family="Liberation Sans" font-weight="bold" font-size="8.3" fill="#0c0c0c" textLength="51" lengthAdjust="spacingAndGlyphs">Computer Lab</text>
<text x="52.2" y="418.5" font-family="Liberation Sans" font-weight="bold" font-size="6.8" fill="#111" textLength="50" lengthAdjust="spacingAndGlyphs">Table of Contents</text>
<rect x="51.2" y="422" width="107.6" height="65.3" fill="#ececec" stroke="#aaa" stroke-width="0.6"/>
<rect x="51.2" y="422" width="107.6" height="6.6" fill="#d6d6d6"/>
<path d="M87.5 422v65.3M51.2 428.6h107.6M51.2 440.8h107.6M51.2 452.3h107.6M51.2 463.9h107.6M51.2 475.4h107.6" stroke="#999" stroke-width="0.5"/>
<g transform="scale(0.34)" font-family="Liberation Sans" font-size="10" fill="#444" text-anchor="middle"><text x="202.9" y="1255.9" font-weight="bold">Pages</text><text x="361.8" y="1255.9" font-weight="bold">Resource</text><text x="202.9" y="1282.4">p. 3 - 4</text><text x="361.8" y="1282.4">Anchor Charts</text><text x="202.9" y="1316.2">p. 5</text><text x="361.8" y="1316.2">Fringe Language Board</text><text x="202.9" y="1350.0">p. 6</text><text x="361.8" y="1350.0">Gather Materials Board</text><text x="202.9" y="1383.8">p. 7 - 8</text><text x="361.8" y="1383.8">Art Project Steps Visual</text><text x="202.9" y="1417.6">p. 9 - 10</text><text x="361.8" y="1417.6">Matching Classroom Supply Labels</text></g>
<!-- page 3 -->
<g transform="translate(46.5 555) scale(0.5275)"><use href="#cardL"/></g>
<!-- page 4 -->
<g transform="translate(46.5 767.5) scale(0.5275)"><use href="#cardV"/></g>
<!-- page 5 -->
<g transform="translate(46.5 980) scale(0.5275)"><use href="#cardR"/></g>
</g>
<rect x="97.5" y="295" width="14" height="19.5" rx="3.5" fill="#1f5fcf"/>
<text x="104.5" y="310.3" text-anchor="middle" font-family="Liberation Sans" font-size="15" fill="#fff">1</text>
<g font-family="Liberation Sans" font-size="15" fill="#3c3c3c" text-anchor="middle">
<text x="104.5" y="523">2</text><text x="104.5" y="736">3</text><text x="104.5" y="949">4</text>
</g>
<defs><linearGradient id="sbg" x1="0" y1="0" x2="0" y2="1"><stop offset="0" stop-color="#cecece"/><stop offset="1" stop-color="#bcbcbc"/></linearGradient></defs><rect x="0" y="1111.5" width="211" height="33" fill="url(#sbg)"/>
<path d="M0 1111.5h211" stroke="#bcbcbc" stroke-width="1"/>
<circle cx="17.6" cy="1128.7" r="7.2" fill="none" stroke="#5a5a5a" stroke-width="1.2"/>
<path d="M17.6 1124.6v8.2M13.5 1128.7h8.2" stroke="#5a5a5a" stroke-width="1.2"/>
<path d="M211 89v1057" stroke="#a9a9a9" stroke-width="1"/>

<defs><linearGradient id="botsh" x1="0" y1="0" x2="0" y2="1"><stop offset="0" stop-color="#000" stop-opacity="0"/><stop offset="1" stop-color="#000" stop-opacity="0.12"/></linearGradient></defs>
<rect x="212" y="1110" width="1835" height="35" fill="url(#botsh)"/>
<path d="M1678.5 759.5L1678.5 775.2L1682.2 771.7L1684.9 777.8L1687.4 776.7L1684.8 770.7L1690 770.7Z" fill="#0a0a0a" stroke="#fff" stroke-width="1.4" stroke-linejoin="round"/>
</svg>
</body></html>
